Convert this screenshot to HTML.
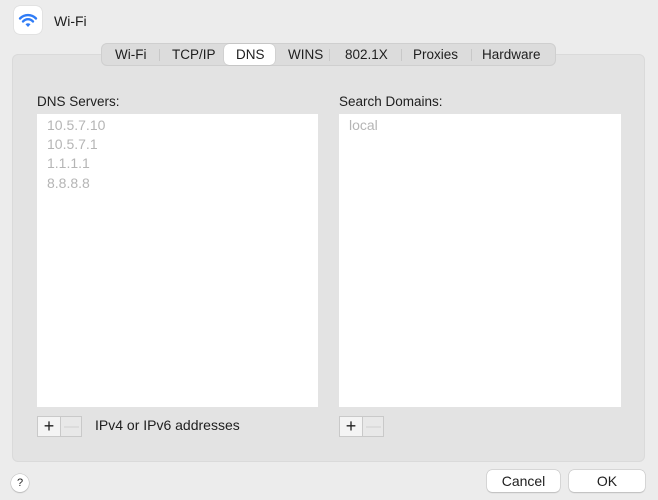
<!DOCTYPE html><html><head><style>
body{margin:0;width:658px;height:500px;background:#ececec;font-family:"Liberation Sans",sans-serif;position:relative;overflow:hidden;color:#1e1e1e}
.a{position:absolute}
.box{left:12px;top:54px;width:633px;height:408px;background:#e3e3e3;border:1px solid #dadada;border-radius:6px;box-sizing:border-box}
.tabs{left:101px;top:43px;width:455px;height:23px;background:#dcdcdc;border:1px solid #cfcfcf;border-radius:6px;box-sizing:border-box;font-size:13.5px}
.tabs span{position:absolute;top:3px}
.list{background:#fff;top:114px;height:293px}
.it{font-size:14px;color:#b5b5b5;position:absolute;left:10px}
.pm{width:45px;height:21px;border:1px solid #c9c9c9;box-sizing:border-box;background:#e8e8e8;top:416px}
.pm .p{position:absolute;left:0;top:0;width:22px;height:19px;background:#f4f4f4;border-right:1px solid #c9c9c9;text-align:center;font-size:18px;line-height:19px}
.pm .m{position:absolute;left:23px;top:0;width:21px;text-align:center;color:#cfcfcf;font-size:15px;line-height:19px}
.btn{top:470px;height:22px;background:#fff;border-radius:5px;box-shadow:0 0 0 .5px #c0c0c0,0 1px 1px #bbb;text-align:center;font-size:14px;line-height:22px}
</style></head><body>
<div class="a" style="left:14px;top:6px;width:28px;height:28px;background:#fff;border-radius:6px;box-shadow:0 0 1px #aaa">
<svg width="28" height="28" viewBox="0 0 28 28"><g fill="none" stroke="#2f7cf6" stroke-width="2.4" stroke-linecap="round"><path d="M6 12.5a11 11 0 0 1 16 0"/><path d="M9 15.5a6.5 6.5 0 0 1 10 0"/></g><path d="M11.5 18.3a3.5 3.5 0 0 1 5 0L14 21z" fill="#2f7cf6"/></svg></div>
<div class="a" style="left:54px;top:13px;font-size:14px">Wi-Fi</div>
<div class="a box"></div>
<div class="a tabs">
<span style="left:13px">Wi-Fi</span><div class="a" style="left:57px;top:5px;width:1px;height:12px;background:#c8c8c8"></div>
<span style="left:70px">TCP/IP</span>
<div class="a" style="left:122px;top:0;width:51px;height:21px;background:#fff;border-radius:5px;box-shadow:0 0 1px #999"></div>
<span style="left:134px">DNS</span>
<span style="left:186px">WINS</span><div class="a" style="left:227px;top:5px;width:1px;height:12px;background:#c8c8c8"></div>
<span style="left:243px">802.1X</span><div class="a" style="left:299px;top:5px;width:1px;height:12px;background:#c8c8c8"></div>
<span style="left:311px">Proxies</span><div class="a" style="left:369px;top:5px;width:1px;height:12px;background:#c8c8c8"></div>
<span style="left:380px">Hardware</span></div>
<div class="a" style="left:37px;top:94px;font-size:13.5px">DNS Servers:</div>
<div class="a" style="left:339px;top:94px;font-size:13.5px">Search Domains:</div>
<div class="a list" style="left:37px;width:281px">
<div class="it" style="top:3px">10.5.7.10</div><div class="it" style="top:22px">10.5.7.1</div><div class="it" style="top:41px">1.1.1.1</div><div class="it" style="top:61px">8.8.8.8</div></div>
<div class="a list" style="left:339px;width:282px"><div class="it" style="top:3px">local</div></div>
<div class="a pm" style="left:37px"><div class="p">+</div><div class="m">—</div></div>
<div class="a" style="left:95px;top:417px;font-size:14px">IPv4 or IPv6 addresses</div>
<div class="a pm" style="left:339px"><div class="p">+</div><div class="m">—</div></div>
<div class="a" style="left:11px;top:474px;width:18px;height:18px;border-radius:50%;background:#fff;box-shadow:0 0 0 .5px #bbb,0 1px 1px #bbb;font-size:11px;text-align:center;line-height:18px">?</div>
<div class="a btn" style="left:487px;width:73px">Cancel</div>
<div class="a btn" style="left:569px;width:76px">OK</div>
</body></html>
